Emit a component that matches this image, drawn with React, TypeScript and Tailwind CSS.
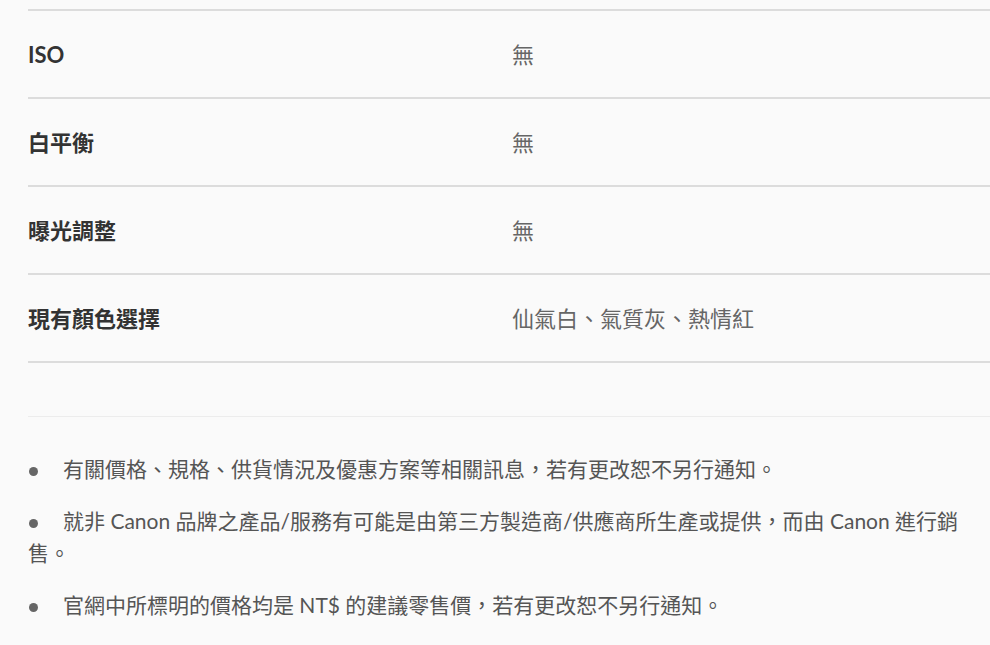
import React from "react";

const specs = [
  { label: "ISO", value: "無" },
  { label: "白平衡", value: "無" },
  { label: "曝光調整", value: "無" },
  { label: "現有顏色選擇", value: "仙氣白、氣質灰、熱情紅" },
];

const notes = [
  "有關價格、規格、供貨情況及優惠方案等相關訊息，若有更改恕不另行通知。",
  "就非 Canon 品牌之產品/服務有可能是由第三方製造商/供應商所生產或提供，而由 Canon 進行銷售。",
  "官網中所標明的價格均是 NT$ 的建議零售價，若有更改恕不另行通知。",
];

export default function App() {
  return (
    <div
      className="min-h-[645px] w-[990px] overflow-hidden bg-[#fafafa] pl-[28px] pt-[9px]"
      style={{ fontFamily: 'Lato, "Noto Sans CJK TC", sans-serif' }}
    >
      <div className="border-t-2 border-[#dcdcdc] text-[22px]">
        {specs.map((spec) => (
          <div
            key={spec.label}
            className="flex h-[88px] items-center border-b-2 border-[#dcdcdc]"
          >
            <div className="w-[484px] font-bold text-[#333]">{spec.label}</div>
            <div className="text-[#666]">{spec.value}</div>
          </div>
        ))}
      </div>
      <div className="h-[54px] border-b border-[#ececec]" />
      <div className="space-y-[20px] pt-[36px] text-[21px] leading-[32px] text-[#555]">
        {notes.map((note) => (
          <p key={note}>
            <span className="mr-[25px] ml-[1px] inline-block h-[9px] w-[9px] rounded-full bg-[#666] align-middle" />
            {note}
          </p>
        ))}
      </div>
    </div>
  );
}
